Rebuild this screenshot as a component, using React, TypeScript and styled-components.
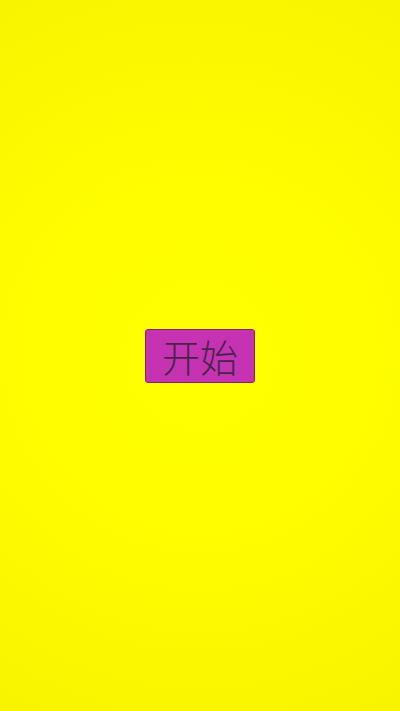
import React from "react";
import styled, { createGlobalStyle } from "styled-components";

const Global = createGlobalStyle`
  html, body { margin: 0; padding: 0; height: 100%; }
  #root { height: 100%; }
`;

const Screen = styled.div`
  width: 100vw;
  height: 100vh;
  display: flex;
  align-items: center;
  justify-content: center;
  background: radial-gradient(circle at center, #ffff00 0%, #fffd00 40%, #f8f300 100%);
`;

const StartButton = styled.button`
  width: 110px;
  height: 54px;
  margin-top: 1px;
  padding: 0;
  display: flex;
  align-items: center;
  justify-content: center;
  background: #c533b3;
  border: 1px solid #7c2a6c;
  border-radius: 3px;
  color: #4a2448;
  font-family: "Noto Sans CJK SC", "Noto Sans", sans-serif;
  font-size: 38px;
  font-weight: 300;
  line-height: 1;
  cursor: pointer;
`;

export default function App() {
  return (
    <>
      <Global />
      <Screen>
        <StartButton>开始</StartButton>
      </Screen>
    </>
  );
}
